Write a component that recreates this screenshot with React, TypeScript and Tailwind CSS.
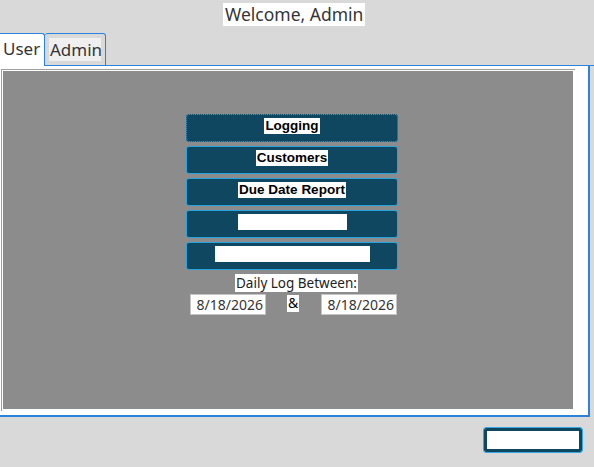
export default function App() {
  const menu = [
    { label: "Logging", focused: true },
    { label: "Customers" },
    { label: "Due Date Report" },
    { blank: "w-[109px]" },
    { blank: "w-[155px]" },
  ];

  return (
    <div className="w-[594px] h-[467px] bg-[#d9d9d9] flex flex-col font-['Noto_Sans',sans-serif] text-[#353535] overflow-hidden">
      {/* greeting */}
      <div className="pt-[3px] flex">
        <span className="ml-[223px] h-[23px] px-[2px] bg-white text-[17.5px] leading-[23px]">Welcome, Admin</span>
      </div>

      {/* tab strip */}
      <div className="mt-[7px] flex h-[33px]">
        <div className="w-[45px] bg-white border-t border-r border-[#2a82da] rounded-tr-[3px] pl-[3px] pt-[3px] text-[17px] leading-[24px]">
          User
        </div>
        <div className="w-[61px] border-t border-r border-b border-[#2a82da] rounded-t-[3px] pl-[4px] pt-[4px]">
          <span className="block w-[52px] h-[23px] bg-[#efefef] text-[17px] leading-[23px] pl-[1px]">Admin</span>
        </div>
        <div className="flex-1 border-b border-[#2a82da]" />
      </div>

      {/* tab page */}
      <div className="w-[590px] h-[351px] bg-white border-r-2 border-b-2 border-[#2a82da] pl-[1px] pt-[3px]">
        <div className="w-[574px] h-[342px] border-t border-l border-[#a0a0a0] pl-[1px] pt-[1px]">
          <div className="w-[570px] h-[338px] bg-[#8c8c8c] pl-[183px] pt-[43px] flex flex-col">
            <div className="flex flex-col gap-[4px] w-[212px]">
              {menu.map((item, i) => (
                <button
                  key={i}
                  className={`h-[28px] w-[212px] rounded-[3px] bg-[#0f4761] border border-[#2aa3dc] pb-[4px] flex items-center justify-center ${
                    item.focused ? "border-dotted" : ""
                  }`}
                >
                  {item.label ? (
                    <span className="bg-white text-black font-['Liberation_Sans',Arial,sans-serif] font-bold text-[13.5px] leading-[16px] px-[1px]">
                      {item.label}
                    </span>
                  ) : (
                    <span className={`block h-[16px] bg-white ${item.blank}`} />
                  )}
                </button>
              ))}
            </div>

            <div className="mt-[4px] flex">
              <span className="ml-[49px] h-[18px] px-[1px] bg-white text-[#222] text-[13.5px] leading-[18px]">
                Daily Log Between:
              </span>
            </div>

            <div className="mt-[2px] flex items-start">
              <div className="ml-[4px] w-[76px] h-[21px] bg-white border border-[#c4c4c4] text-right pr-[2px] text-[14px] leading-[19px]">
                8/18/2026
              </div>
              <span className="ml-[21px] mt-[1px] w-[12px] h-[17px] bg-white text-black text-center text-[14px] leading-[16px]">
                &amp;
              </span>
              <div className="ml-[22px] w-[76px] h-[21px] bg-white border border-[#c4c4c4] text-right pr-[2px] text-[14px] leading-[19px]">
                8/18/2026
              </div>
            </div>
          </div>
        </div>
      </div>

      {/* bottom action */}
      <div className="mt-[11px] flex">
        <button className="ml-[484px] w-[98px] h-[24px] bg-white border-[3px] border-[#0f4761] rounded-[2px] outline outline-[#3aa8e0]" />
      </div>
    </div>
  );
}
